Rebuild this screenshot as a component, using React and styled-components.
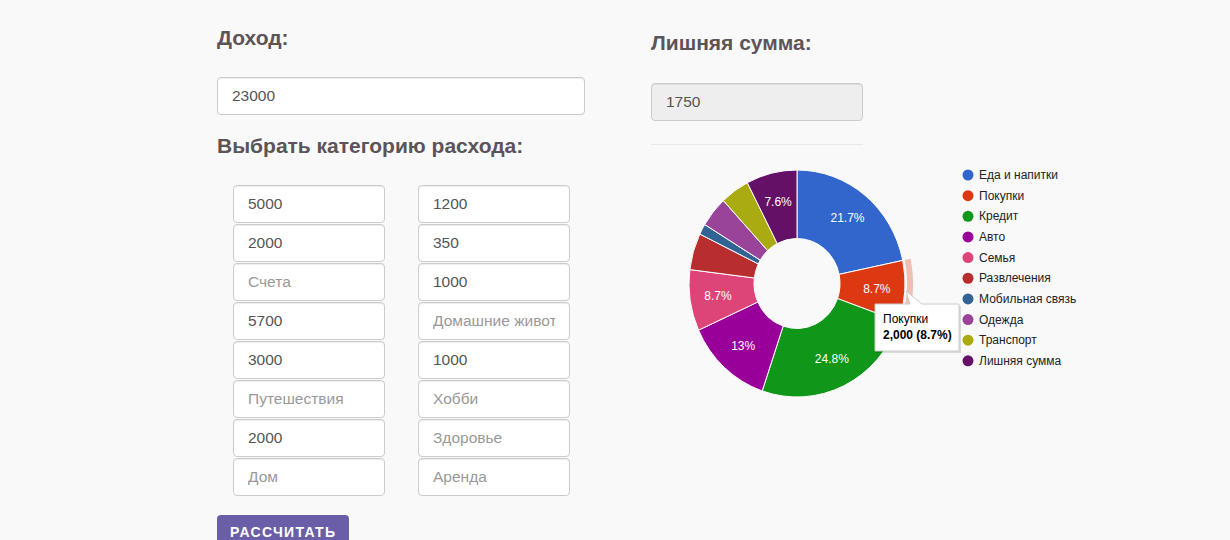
import React from "react";
import styled, { createGlobalStyle } from "styled-components";

const GlobalStyle = createGlobalStyle`
  body {
    margin: 0;
    background: #f9f9f9;
    font-family: "Liberation Sans", Arial, sans-serif;
  }
`;

const Page = styled.div`
  display: flex;
  align-items: flex-start;
  padding-left: 217px;
  height: 540px;
  overflow: hidden;
`;

const LeftColumn = styled.div`
  width: 368px;
  padding-top: 25px;
`;

const RightColumn = styled.div`
  margin-left: 66px;
  padding-top: 30px;
`;

const Heading = styled.h3`
  margin: 0;
  font-size: 21px;
  line-height: 26px;
  font-weight: bold;
  color: #5c5458;
`;

const TextInput = styled.input`
  display: block;
  box-sizing: border-box;
  width: ${(p) => p.$width || "100%"};
  height: 38px;
  margin: ${(p) => p.$margin || "0"};
  padding: 0 14px;
  border: 1px solid #ccc;
  border-radius: 4px;
  background: ${(p) => (p.disabled ? "#eee" : "#fff")};
  box-shadow: inset 0 1px 1px rgba(0, 0, 0, 0.075);
  font-family: "Liberation Sans", Arial, sans-serif;
  font-size: 15.5px;
  color: #555;
  outline: none;

  &::placeholder {
    color: #999;
  }
`;

const CategoryGrid = styled.div`
  display: grid;
  grid-template-columns: 152px 152px;
  column-gap: 33px;
  row-gap: 1px;
  padding-left: 16px;
  margin-top: 26px;
`;

const CalcButton = styled.button`
  margin-top: 19px;
  height: 34px;
  padding: 0 13px;
  border: none;
  border-radius: 4px;
  background: #6b5ea8;
  color: #fff;
  font-family: "Liberation Sans", Arial, sans-serif;
  font-size: 14px;
  font-weight: bold;
  letter-spacing: 1.3px;
  cursor: pointer;
`;

const Divider = styled.hr`
  width: 212px;
  margin: 23px 0 0;
  border: none;
  border-top: 1px solid #e8e8e8;
`;

const ChartBox = styled.svg`
  display: block;
  margin-top: 6px;
  overflow: visible;
`;

const categories = [
  ["5000", "1200"],
  ["2000", "350"],
  [{ ph: "Счета" }, "1000"],
  ["5700", { ph: "Домашние животные" }],
  ["3000", "1000"],
  [{ ph: "Путешествия" }, { ph: "Хобби" }],
  ["2000", { ph: "Здоровье" }],
  [{ ph: "Дом" }, { ph: "Аренда" }],
];

const slices = [
  { name: "Еда и напитки", value: 5000, color: "#3366cc" },
  { name: "Покупки", value: 2000, color: "#dc3912" },
  { name: "Кредит", value: 5700, color: "#109618" },
  { name: "Авто", value: 3000, color: "#990099" },
  { name: "Семья", value: 2000, color: "#dd4477" },
  { name: "Развлечения", value: 1200, color: "#b82e2e" },
  { name: "Мобильная связь", value: 350, color: "#316395" },
  { name: "Одежда", value: 1000, color: "#994499" },
  { name: "Транспорт", value: 1000, color: "#aaaa11" },
  { name: "Лишняя сумма", value: 1750, color: "#651067" },
];

const CX = 797;
const CY = 282.5;
const RX = 108;
const RY = 113.5;
const IRX = 43;
const IRY = 45;

const pt = (a, rx, ry) => [CX + rx * Math.sin(a), CY - ry * Math.cos(a)];

const arcPath = (a0, a1, rx, ry, irx, iry) => {
  const large = a1 - a0 > Math.PI ? 1 : 0;
  const [x0, y0] = pt(a0, rx, ry);
  const [x1, y1] = pt(a1, rx, ry);
  const [x2, y2] = pt(a1, irx, iry);
  const [x3, y3] = pt(a0, irx, iry);
  return `M${x0},${y0} A${rx},${ry} 0 ${large} 1 ${x1},${y1} L${x2},${y2} A${irx},${iry} 0 ${large} 0 ${x3},${y3} Z`;
};

const DonutChart = () => {
  const total = slices.reduce((s, d) => s + d.value, 0);
  let acc = 0;
  const parts = slices.map((d) => {
    const a0 = (acc / total) * Math.PI * 2;
    acc += d.value;
    const a1 = (acc / total) * Math.PI * 2;
    const pct = (d.value / total) * 100;
    return { ...d, a0, a1, pct };
  });
  const hovered = parts[1];

  return (
    <ChartBox width="480" height="270" viewBox="651 150 480 270">
      {parts.map((p) => (
        <path
          key={p.name}
          d={arcPath(p.a0, p.a1, RX, RY, IRX, IRY)}
          fill={p.color}
          stroke="#fff"
          strokeWidth="1"
        />
      ))}
      <path
        d={arcPath(hovered.a0, hovered.a1, RX + 8, RY + 8, RX + 2, RY + 2)}
        fill="#dc3912"
        fillOpacity="0.3"
      />
      {parts
        .filter((p) => p.pct > 7)
        .map((p) => {
          const [x, y] = pt((p.a0 + p.a1) / 2, 80, 84);
          const rounded = Math.round(p.pct * 10) / 10;
          const label = Number.isInteger(rounded) ? `${rounded}%` : `${rounded.toFixed(1)}%`;
          return (
            <text
              key={p.name}
              x={x}
              y={y + 4}
              textAnchor="middle"
              fontSize="12"
              fill="#fff"
              fontFamily="Liberation Sans, Arial, sans-serif"
            >
              {label}
            </text>
          );
        })}
      {parts.map((p, i) => {
        const y = 174 + i * 20.65;
        return (
          <g key={p.name}>
            <circle cx="968" cy={y} r="5.5" fill={p.color} />
            <text
              x="979"
              y={y + 4}
              fontSize="12"
              fill="#222"
              fontFamily="Liberation Sans, Arial, sans-serif"
            >
              {p.name}
            </text>
          </g>
        );
      })}
      <path
        d="M876,305 H911 L907,292 L923,305 H961 V352 H876 Z"
        fill="#000"
        fillOpacity="0.12"
      />
      <path
        d="M875,303 H910 L906,290 L922,303 H959 V350 H875 Z"
        fill="#fff"
        stroke="#ccc"
        strokeWidth="1"
      />
      <text x="883" y="322" fontSize="12" fill="#000" fontFamily="Liberation Sans, Arial, sans-serif">
        Покупки
      </text>
      <text
        x="883"
        y="338"
        fontSize="12"
        fontWeight="bold"
        fill="#000"
        fontFamily="Liberation Sans, Arial, sans-serif"
      >
        2,000 (8.7%)
      </text>
    </ChartBox>
  );
};

const CategoryInput = ({ item }) =>
  typeof item === "string" ? (
    <TextInput type="text" defaultValue={item} />
  ) : (
    <TextInput type="text" placeholder={item.ph} />
  );

export default function App() {
  return (
    <>
      <GlobalStyle />
      <Page>
        <LeftColumn>
          <Heading>Доход:</Heading>
          <TextInput type="text" defaultValue="23000" $margin="26px 0 18px" />
          <Heading>Выбрать категорию расхода:</Heading>
          <CategoryGrid>
            {categories.map((row, i) => (
              <React.Fragment key={i}>
                <CategoryInput item={row[0]} />
                <CategoryInput item={row[1]} />
              </React.Fragment>
            ))}
          </CategoryGrid>
          <CalcButton>РАССЧИТАТЬ</CalcButton>
        </LeftColumn>
        <RightColumn>
          <Heading>Лишняя сумма:</Heading>
          <TextInput type="text" value="1750" disabled $width="212px" $margin="27px 0 0" />
          <Divider />
          <DonutChart />
        </RightColumn>
      </Page>
    </>
  );
}
